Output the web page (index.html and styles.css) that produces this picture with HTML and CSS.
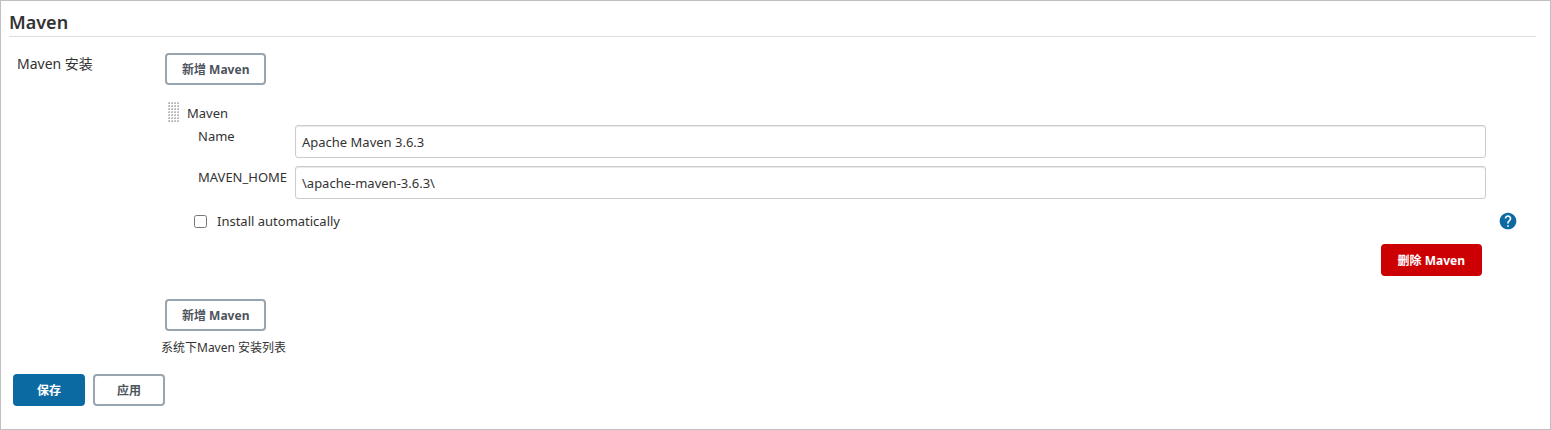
FILE: index.html
```html
<!DOCTYPE html>
<html lang="zh-CN">

<head>
    <meta charset="UTF-8">
    <meta name="viewport" content="width=device-width, initial-scale=1.0">
    <title>Maven</title>
    <link rel="stylesheet" href="styles.css">
</head>

<body>
    <form class="config">
        <h2 class="section-header">Maven</h2>
        <div class="setting">
            <div class="setting-name">Maven 安装</div>
            <div class="setting-main">
                <button type="button" class="btn">新增 Maven</button>
                <div class="chunk">
                    <div class="chunk-header">
                        <svg class="handle" width="12" height="20" viewBox="0 0 12 20">
                            <defs>
                                <pattern id="dots" width="3" height="3" patternUnits="userSpaceOnUse">
                                    <path d="M0 1h2v1H0z" fill="#bbb"/>
                                    <path d="M1 0h1v1H1z" fill="#bbb"/>
                                    <path d="M0 0h1v1H0z" fill="#ddd"/>
                                </pattern>
                            </defs>
                            <rect width="12" height="20" fill="url(#dots)"/>
                        </svg>
                        <span>Maven</span>
                    </div>
                    <div class="field">
                        <label for="name">Name</label>
                        <input type="text" id="name" value="Apache Maven 3.6.3">
                    </div>
                    <div class="field">
                        <label for="home">MAVEN_HOME</label>
                        <input type="text" id="home" value="\apache-maven-3.6.3\">
                    </div>
                    <div class="auto">
                        <input type="checkbox" id="auto">
                        <label for="auto">Install automatically</label>
                        <a class="help" href="#" aria-label="Help">
                            <svg width="20" height="20" viewBox="0 0 24 24">
                                <path fill="#0b6aa2" d="M12 2C6.48 2 2 6.48 2 12s4.48 10 10 10 10-4.48 10-10S17.52 2 12 2zm1 17h-2v-2h2v2zm2.07-7.75l-.9.92C13.45 12.9 13 13.5 13 15h-2v-.5c0-1.1.45-2.1 1.17-2.83l1.24-1.26c.37-.36.59-.86.59-1.41 0-1.1-.9-2-2-2s-2 .9-2 2H8c0-2.21 1.79-4 4-4s4 1.79 4 4c0 .88-.36 1.68-.93 2.25z"/>
                            </svg>
                        </a>
                    </div>
                    <div class="chunk-footer">
                        <button type="button" class="btn danger">删除 Maven</button>
                    </div>
                </div>
                <button type="button" class="btn">新增 Maven</button>
                <div class="description">系统下Maven 安装列表</div>
            </div>
        </div>
        <div class="actions">
            <button type="submit" class="btn primary">保存</button>
            <button type="button" class="btn">应用</button>
        </div>
    </form>
</body>

</html>
```

FILE: styles.css
```css
* {
    box-sizing: border-box;
}
body {
    margin: 0;
    min-height: 100vh;
    padding: 8px 14px 0 8px;
    border: 1px solid #c0c0c0;
    background-color: white;
    color: #333;
    font: 14px/22px "Noto Sans", "Noto Sans CJK SC", sans-serif;
}
.section-header {
    margin: 0;
    padding-bottom: 1px;
    border-bottom: 1px solid #ddd;
    font-size: 18px;
    line-height: 26px;
    font-weight: 600;
}

.setting {
    display: flex;
    padding: 16px 0 0 8px;
}
.setting-name {
    width: 148px;
    flex-shrink: 0;
}
.setting-main {
    flex: 1;
}

.btn {
    display: block;
    height: 32px;
    padding: 0 15px;
    border: 2px solid #98a4ae;
    border-radius: 4px;
    background-color: white;
    color: #4d545d;
    font-family: inherit;
    font-size: 12px;
    font-weight: 700;
}
.danger {
    border-color: #cc0003;
    background-color: #cc0003;
    color: white;
}
.primary {
    border-color: #0b6aa2;
    background-color: #0b6aa2;
    color: white;
}

.chunk {
    padding: 17px 0 23px 3px;
    font-size: 13px;
}
.chunk-header {
    display: flex;
    gap: 7px;
    margin-bottom: 1px;
}
.field {
    display: flex;
    padding: 0 50px 0 30px;
    margin-bottom: 8px;
}
.field label {
    width: 97px;
    flex-shrink: 0;
}
.field input {
    flex: 1;
    height: 33px;
    padding: 0 6px;
    border: 1px solid #ccc;
    border-radius: 3px;
    box-shadow: inset 0 1px 1px #e8e8e8;
    color: #333;
    font: inherit;
}
.auto {
    display: flex;
    align-items: center;
    height: 28px;
    padding: 0 18px 0 26px;
}
.auto input {
    margin: 0 10px 0 0;
}
.help {
    display: flex;
    margin-left: auto;
}
.chunk-footer {
    display: flex;
    justify-content: flex-end;
    padding: 9px 54px 0 0;
}

.description {
    margin: 6px 0 0 -4px;
    font-size: 12px;
}
.actions {
    display: flex;
    gap: 8px;
    padding: 15px 0 0 4px;
}
.actions .btn {
    width: 72px;
}
```
